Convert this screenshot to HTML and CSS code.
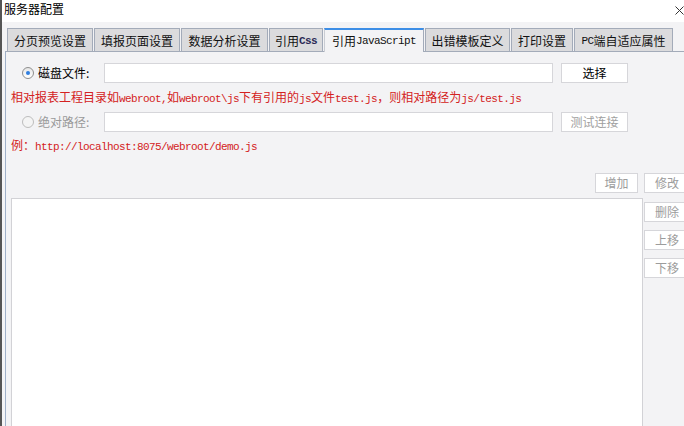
FILE: index.html
```html
<!DOCTYPE html>
<html>
<head>
<meta charset="utf-8">
<link rel="stylesheet" href="styles.css">
</head>
<body>
<div class="app">
  <div class="titlebar">
    <span class="title">服务器配置</span>
    <svg class="close" width="9" height="9" viewBox="0 0 9 9"><path d="M0.5 0.5L8.5 8.5M8.5 0.5L0.5 8.5" stroke="#333" stroke-width="1" fill="none"/></svg>
  </div>
  <div class="body">
    <div class="tabs">
      <div class="tab t1">分页预览设置</div>
      <div class="tab t2">填报页面设置</div>
      <div class="tab t3">数据分析设置</div>
      <div class="tab t4">引用<span class="mono css">Css</span></div>
      <div class="tab t5 active">引用<span class="mono">JavaScript</span></div>
      <div class="tab t6">出错模板定义</div>
      <div class="tab t7">打印设置</div>
      <div class="tab t8"><span class="mono">PC</span>端自适应属性</div>
    </div>
    <div class="panel">
      <div class="row row1">
        <div class="choice"><span class="radio checked"></span><span class="label">磁盘文件:</span></div>
        <div class="input"></div>
        <div class="btn">选择</div>
      </div>
      <p class="hint">相对报表工程目录如<span class="mono">webroot,</span>如<span class="mono">webroot\js</span>下有引用的<span class="mono">js</span>文件<span class="mono">test.js</span>，则相对路径为<span class="mono">js/test.js</span></p>
      <div class="row row2 disabled">
        <div class="choice"><span class="radio"></span><span class="label">绝对路径:</span></div>
        <div class="input"></div>
        <div class="btn">测试连接</div>
      </div>
      <p class="example">例：<span class="mono ex">http://localhost:8075/webroot/demo.js</span></p>
      <div class="lower">
        <div class="toolbar"><div class="sbtn">增加</div></div>
        <div class="sbtn top">修改</div>
        <div class="list"></div>
        <div class="side">
          <div class="sbtn">删除</div>
          <div class="sbtn">上移</div>
          <div class="sbtn">下移</div>
        </div>
      </div>
    </div>
  </div>
</div>
</body>
</html>
```

FILE: styles.css
```css
html, body {
  margin: 0;
  padding: 0;
  overflow: hidden;
}
body {
  width: 684px;
  height: 426px;
  font-family: "Noto Sans CJK SC", "Noto Sans", sans-serif;
  font-size: 12px;
  color: #000;
}
.app {
  width: 720px;
  height: 426px;
  display: flex;
  flex-direction: column;
  border-left: 2px solid #555;
  box-sizing: border-box;
}
.titlebar {
  height: 22px;
  flex: none;
  background: #fff;
  display: flex;
  align-items: center;
  padding-left: 2px;
  position: relative;
}
.title {
  font-size: 12px;
  line-height: 16px;
  margin-top: -4px;
}
.close {
  position: absolute;
  left: 673px;
  top: 6px;
}
.body {
  flex: 1;
  background: #f3f3f5;
  padding: 5px 0 0 3px;
  display: flex;
  flex-direction: column;
  min-height: 0;
}
.mono {
  font-family: "Liberation Mono", "DejaVu Sans Mono", monospace;
  font-size: 11px;
  letter-spacing: -0.6px;
}
.tabs {
  display: flex;
  align-items: flex-end;
  gap: 1px;
  padding-left: 2px;
  height: 24px;
  flex: none;
}
.tab {
  height: 23px;
  box-sizing: border-box;
  border: 1px solid #a3abb9;
  border-bottom: none;
  background: #dbdbdd;
  display: flex;
  align-items: center;
  justify-content: center;
  line-height: 16px;
  padding-top: 1px;
  color: #111;
}
.tab.active {
  height: 24px;
  background: #f3f3f5;
  border-top: 2px solid #3d8ee6;
  border-left-color: #c9ccd3;
  border-right-color: #a3abb9;
  margin-bottom: -1px;
  position: relative;
  z-index: 1;
  padding-top: 0;
}
.t1 { width: 86px; }
.t2 { width: 86px; }
.t3 { width: 87px; }
.t4 { width: 54px; }
.t5 { width: 100px; }
.t6 { width: 85px; }
.t7 { width: 62px; }
.t8 { width: 99px; }
.css { color: #2a2a55; font-weight: bold; }
.panel {
  flex: 1;
  border-top: 1px solid #a3abb9;
  border-left: 1px solid #9fb0c8;
  display: flex;
  flex-direction: column;
  min-height: 0;
}
.row {
  display: flex;
  align-items: center;
  height: 20px;
  padding-left: 16px;
  flex: none;
}
.row1 { margin-top: 11px; }
.row2 { margin-top: 6px; }
.choice {
  width: 82px;
  display: flex;
  align-items: center;
  gap: 4px;
}
.label { line-height: 16px; }
.radio {
  width: 12px;
  height: 12px;
  box-sizing: border-box;
  border-radius: 50%;
  border: 1px solid #8e8e8e;
  background: linear-gradient(#e6e6e6, #ffffff);
  display: flex;
  align-items: center;
  justify-content: center;
}
.radio.checked::after {
  content: "";
  width: 4px;
  height: 4px;
  border-radius: 50%;
  background: #2f7ee0;
}
.disabled .radio {
  border-color: #bdbdbd;
  background: #f4f4f4;
}
.disabled .label { color: #9a9a9a; }
.input {
  width: 449px;
  height: 20px;
  box-sizing: border-box;
  border: 1px solid #d6d6da;
  background: #fff;
}
.btn {
  width: 67px;
  height: 20px;
  box-sizing: border-box;
  margin-left: 8px;
  border: 1px solid #d6d6da;
  background: #fff;
  display: flex;
  align-items: center;
  justify-content: center;
  line-height: 16px;
}
.disabled .btn { color: #a0a0a0; }
.hint, .example {
  margin: 0;
  padding-left: 5px;
  height: 18px;
  line-height: 18px;
  color: #d42222;
  white-space: nowrap;
  flex: none;
}
.hint { margin-top: 5px; }
.example { margin-top: 4px; }
.ex { font-weight: normal; }
.lower {
  flex: 1;
  margin-top: 19px;
  padding-left: 5px;
  display: grid;
  grid-template-columns: 632px 46px;
  grid-template-rows: 20px 1fr;
  column-gap: 1px;
  row-gap: 5px;
  min-height: 0;
}
.toolbar {
  display: flex;
  justify-content: flex-end;
  padding-right: 5px;
}
.sbtn {
  width: 43px;
  height: 20px;
  box-sizing: border-box;
  border: 1px solid #d6d6da;
  background: #fff;
  color: #9c9c9c;
  display: flex;
  align-items: center;
  justify-content: center;
  line-height: 16px;
  font-size: 12px;
}
.lower > .sbtn.top { width: 46px; }
.list {
  border: 1px solid #d2d2d6;
  border-bottom: none;
  background: #fff;
}
.side {
  display: flex;
  flex-direction: column;
  gap: 8px;
  padding-top: 4px;
}
.side .sbtn { width: 46px; height: 20px; }
```
